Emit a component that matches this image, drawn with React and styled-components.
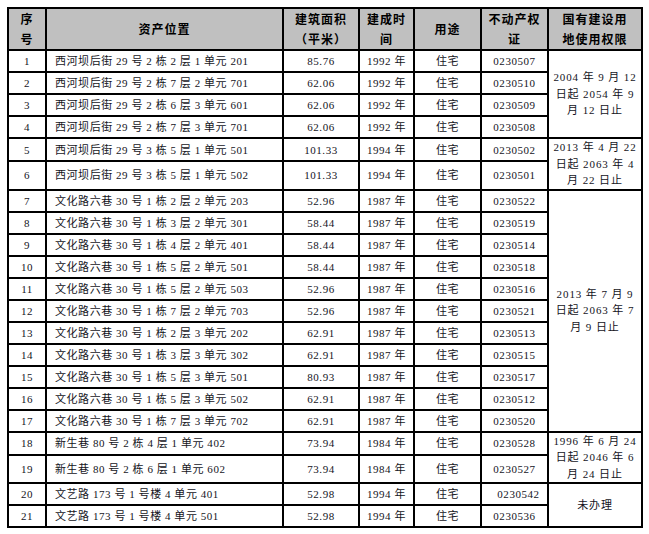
import React from "react";
import styled, { createGlobalStyle } from "styled-components";

const GlobalStyle = createGlobalStyle`
  html, body { margin: 0; padding: 0; background: #ffffff; }
  body { font-family: "Liberation Serif", "Noto Sans CJK SC", serif; }
`;

const Page = styled.div`
  padding: 7px 0 0 7px;
`;

const Table = styled.table`
  border-collapse: collapse;
  table-layout: fixed;
  width: 634px;
  color: #14141c;
`;

const HeadCell = styled.th`
  background: #c0c0c0;
  border: 2px solid #000;
  height: 39px;
  padding: 0;
  font-family: "Noto Sans CJK SC", sans-serif;
  font-weight: 700;
  font-size: 12px;
  line-height: 20px;
  letter-spacing: 1px;
  color: #000;
  text-align: center;
  vertical-align: middle;
`;

const Cell = styled.td`
  border: 2px solid #000;
  height: ${(p) => (p.$tall ? 25 : 20)}px;
  padding: 0;
  padding-left: ${(p) => (p.$left ? 8 : p.$shift || 0)}px;
  font-family: "Liberation Serif", "Noto Sans CJK SC", serif;
  font-size: 11px;
  letter-spacing: 0.55px;
  line-height: 14px;
  text-align: ${(p) => (p.$left ? "left" : "center")};
  vertical-align: middle;
  white-space: nowrap;
`;

const TermCell = styled.td`
  border: 2px solid #000;
  padding: 0;
  font-family: "Liberation Serif", "Noto Sans CJK SC", serif;
  font-size: 11px;
  letter-spacing: 0.9px;
  line-height: 16.5px;
  text-align: center;
  vertical-align: middle;
`;

const Line = styled.div`
  white-space: nowrap;
`;

const rows = [
  [1, "西河坝后街 29 号 2 栋 2 层 1 单元 201", "85.76", "1992 年", "住宅", "0230507"],
  [2, "西河坝后街 29 号 2 栋 7 层 2 单元 701", "62.06", "1992 年", "住宅", "0230510"],
  [3, "西河坝后街 29 号 2 栋 6 层 3 单元 601", "62.06", "1992 年", "住宅", "0230509"],
  [4, "西河坝后街 29 号 2 栋 7 层 3 单元 701", "62.06", "1992 年", "住宅", "0230508"],
  [5, "西河坝后街 29 号 3 栋 5 层 1 单元 501", "101.33", "1994 年", "住宅", "0230502"],
  [6, "西河坝后街 29 号 3 栋 5 层 1 单元 502", "101.33", "1994 年", "住宅", "0230501"],
  [7, "文化路六巷 30 号 1 栋 2 层 2 单元 203", "52.96", "1987 年", "住宅", "0230522"],
  [8, "文化路六巷 30 号 1 栋 3 层 2 单元 301", "58.44", "1987 年", "住宅", "0230519"],
  [9, "文化路六巷 30 号 1 栋 4 层 2 单元 401", "58.44", "1987 年", "住宅", "0230514"],
  [10, "文化路六巷 30 号 1 栋 5 层 2 单元 501", "58.44", "1987 年", "住宅", "0230518"],
  [11, "文化路六巷 30 号 1 栋 5 层 2 单元 503", "52.96", "1987 年", "住宅", "0230516"],
  [12, "文化路六巷 30 号 1 栋 7 层 2 单元 703", "52.96", "1987 年", "住宅", "0230521"],
  [13, "文化路六巷 30 号 1 栋 2 层 3 单元 202", "62.91", "1987 年", "住宅", "0230513"],
  [14, "文化路六巷 30 号 1 栋 3 层 3 单元 302", "62.91", "1987 年", "住宅", "0230515"],
  [15, "文化路六巷 30 号 1 栋 5 层 3 单元 501", "80.93", "1987 年", "住宅", "0230517"],
  [16, "文化路六巷 30 号 1 栋 5 层 3 单元 502", "62.91", "1987 年", "住宅", "0230512"],
  [17, "文化路六巷 30 号 1 栋 7 层 3 单元 702", "62.91", "1987 年", "住宅", "0230520"],
  [18, "新生巷 80 号 2 栋 4 层 1 单元 402", "73.94", "1984 年", "住宅", "0230528"],
  [19, "新生巷 80 号 2 栋 6 层 1 单元 602", "73.94", "1984 年", "住宅", "0230527"],
  [20, "文艺路 173 号 1 号楼 4 单元 401", "52.98", "1994 年", "住宅", "0230542"],
  [21, "文艺路 173 号 1 号楼 4 单元 501", "52.98", "1994 年", "住宅", "0230536"],
];

const terms = {
  1: { span: 4, lines: ["2004 年 9 月 12", "日起 2054 年 9", "月 12 日止"] },
  5: { span: 2, lines: ["2013 年 4 月 22", "日起 2063 年 4", "月 22 日止"] },
  7: { span: 11, lines: ["2013 年 7 月 9", "日起 2063 年 7", "月 9 日止"] },
  18: { span: 2, lines: ["1996 年 6 月 24", "日起 2046 年 6", "月 24 日止"] },
  20: { span: 2, lines: ["未办理"] },
};

const tallRows = new Set([6, 19]);

export default function App() {
  return (
    <Page>
      <GlobalStyle />
      <Table>
        <colgroup>
          <col style={{ width: 38 }} />
          <col style={{ width: 237 }} />
          <col style={{ width: 76 }} />
          <col style={{ width: 55 }} />
          <col style={{ width: 67 }} />
          <col style={{ width: 67 }} />
          <col style={{ width: 94 }} />
        </colgroup>
        <thead>
          <tr>
            <HeadCell>序<br />号</HeadCell>
            <HeadCell>资产位置</HeadCell>
            <HeadCell>建筑面积<br />（平米）</HeadCell>
            <HeadCell>建成时<br />间</HeadCell>
            <HeadCell>用途</HeadCell>
            <HeadCell>不动产权<br />证</HeadCell>
            <HeadCell>国有建设用<br />地使用权限</HeadCell>
          </tr>
        </thead>
        <tbody>
          {rows.map(([n, addr, area, year, use, cert]) => {
            const tall = tallRows.has(n);
            const term = terms[n];
            return (
              <tr key={n}>
                <Cell $tall={tall}>{n}</Cell>
                <Cell $tall={tall} $left>{addr}</Cell>
                <Cell $tall={tall}>{area}</Cell>
                <Cell $tall={tall}>{year}</Cell>
                <Cell $tall={tall}>{use}</Cell>
                <Cell $tall={tall} $shift={n === 20 ? 8 : 0}>{cert}</Cell>
                {term && (
                  <TermCell rowSpan={term.span}>
                    {term.lines.map((l) => (
                      <Line key={l}>{l}</Line>
                    ))}
                  </TermCell>
                )}
              </tr>
            );
          })}
        </tbody>
      </Table>
    </Page>
  );
}
